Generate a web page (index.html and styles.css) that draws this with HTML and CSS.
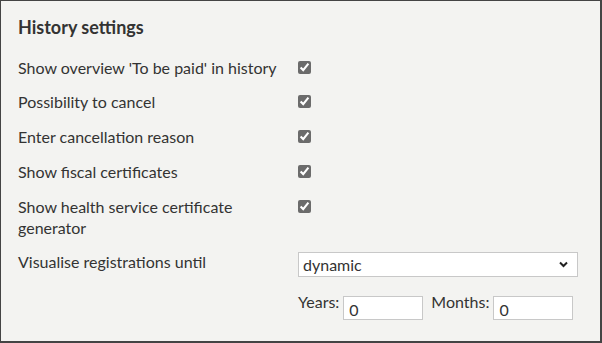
FILE: index.html
```html
<!DOCTYPE html>
<html lang="en">
<head>
    <meta charset="UTF-8">
    <title>History settings</title>
    <link rel="stylesheet" href="styles.css">
</head>
<body>
    <div class="panel">
        <h2>History settings</h2>

        <div class="row">
            <label for="toBePaid">Show overview 'To be paid' in history</label>
            <div class="field"><input type="checkbox" id="toBePaid" checked></div>
        </div>
        <div class="row">
            <label for="cancel">Possibility to cancel</label>
            <div class="field"><input type="checkbox" id="cancel" checked></div>
        </div>
        <div class="row">
            <label for="reason">Enter cancellation reason</label>
            <div class="field"><input type="checkbox" id="reason" checked></div>
        </div>
        <div class="row">
            <label for="fiscal">Show fiscal certificates</label>
            <div class="field"><input type="checkbox" id="fiscal" checked></div>
        </div>
        <div class="row">
            <label for="health">Show health service certificate generator</label>
            <div class="field"><input type="checkbox" id="health" checked></div>
        </div>
        <div class="row">
            <label for="until">Visualise registrations until</label>
            <div class="field">
                <div class="select-wrap">
                    <select id="until">
                        <option>dynamic</option>
                        <option>fixed date</option>
                    </select>
                    <svg class="chevron" width="9" height="7" viewBox="0 0 9 7">
                        <path d="M1 1.5 L4.5 5 L8 1.5" fill="none" stroke="#222" stroke-width="2"/>
                    </svg>
                </div>
                <div class="period">
                    <label for="years">Years:</label>
                    <input type="text" id="years" value="0">
                    <label for="months" class="months">Months:</label>
                    <input type="text" id="months" value="0">
                </div>
            </div>
        </div>
    </div>
</body>
</html>
```

FILE: styles.css
```css
html, body {
    margin: 0;
    padding: 0;
}
body {
    font-family: Lato, 'Open Sans', sans-serif;
    color: #333;
    font-size: 16px;
    line-height: 21px;
}
.panel {
    box-sizing: border-box;
    width: 602px;
    height: 343px;
    background-color: #f3f3f1;
    border: 1px solid #444;
    border-right-width: 2px;
    border-bottom-width: 2px;
    padding: 16px 20px 0 17px;
}
h2 {
    margin: 0 0 18.5px 0;
    font-size: 18px;
    line-height: 21px;
    font-weight: bold;
    color: #333;
}
.row {
    display: grid;
    grid-template-columns: 280px 1fr;
    margin-bottom: 13.8px;
}
.row label {
    padding-right: 10px;
}
.field input[type=checkbox] {
    margin: 4px 0 0 0;
    width: 13px;
    height: 13px;
    accent-color: #6b6b6b;
}
.select-wrap {
    position: relative;
    width: 280px;
    margin-top: 1px;
}
select {
    appearance: none;
    box-sizing: border-box;
    width: 280px;
    height: 25px;
    border: 1px solid #c8c8c8;
    background: #fff;
    font-family: inherit;
    font-size: 16px;
    color: #333;
    padding: 0 4px;
    border-radius: 0;
}
.chevron {
    position: absolute;
    right: 10px;
    top: 9px;
    pointer-events: none;
}
.period {
    display: flex;
    align-items: flex-start;
    margin-top: 19px;
}
.period label {
    padding: 0;
    margin-top: -5px;
}
.period input {
    box-sizing: border-box;
    width: 80px;
    height: 24px;
    margin-left: 4px;
    border: 1px solid #c8c8c8;
    background: #fff;
    font-family: inherit;
    font-size: 16px;
    color: #333;
    padding: 2px 5px 0 5px;
}
.period .months {
    margin-left: 8px;
}
```
